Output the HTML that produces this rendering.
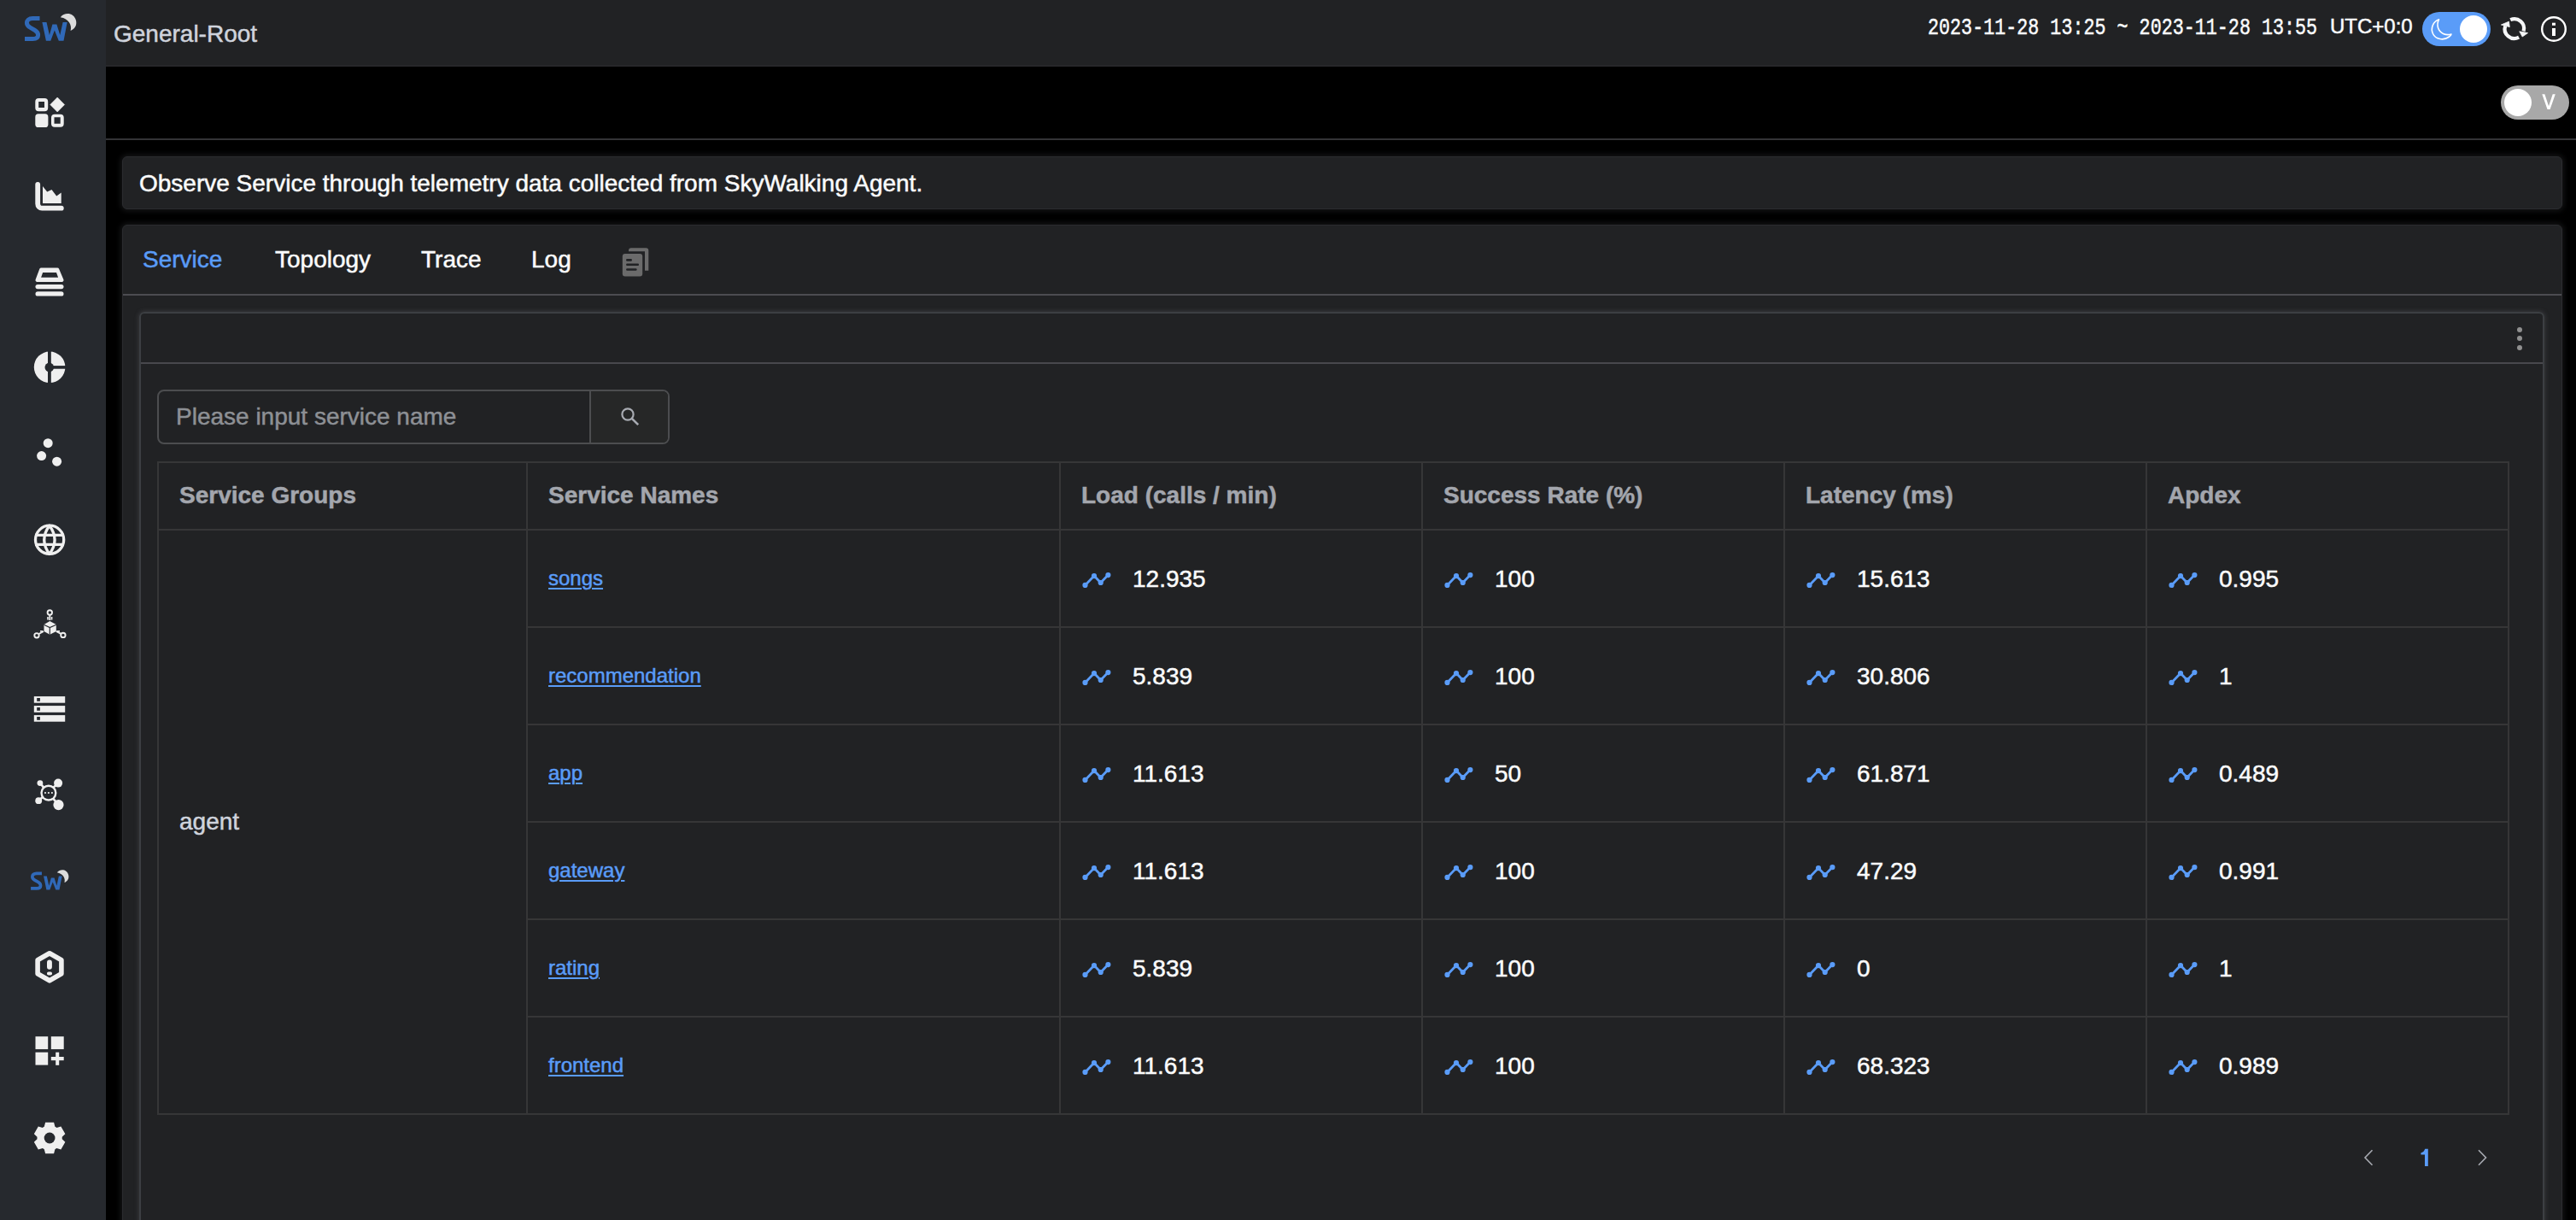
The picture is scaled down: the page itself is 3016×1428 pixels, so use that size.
<!DOCTYPE html>
<html><head><meta charset="utf-8">
<style>
*{box-sizing:border-box;margin:0;padding:0}
html,body{width:3016px;height:1428px;overflow:hidden;background:#000;font-family:"Liberation Sans",sans-serif;position:relative}
.abs{position:absolute}
.t{position:absolute;white-space:nowrap;font-size:28px;line-height:28px;-webkit-text-stroke-width:0.5px}
.b{font-weight:bold}
.lk{font-size:24px;line-height:24px;color:#5a9cf8;text-decoration:underline;text-decoration-thickness:2px;text-underline-offset:3px}
.mono{font-family:"Liberation Mono",monospace}
</style></head><body>
<div class="abs" style="left:0;top:0;width:124px;height:1428px;background:#26292e"></div>
<div class="abs" style="left:124px;top:0;width:2892px;height:78px;background:#212224;border-bottom:2px solid #27272a"></div>
<div class="abs" style="left:124px;top:78px;width:2892px;height:86px;background:#000;border-bottom:2px solid #333336"></div>
<svg class="abs" style="left:0;top:0" width="124" height="1428" viewBox="0 0 124 1428">
<g transform="">
<path d="M46.5,21.6 H38.2 C33.6,21.6 31.4,24 31.4,26.8 C31.4,29.4 32.9,30.9 35.6,32.4 L40.6,35.2 C43.4,36.8 44.6,38.4 44.6,41 C44.6,43.6 42.6,45.5 38.4,45.5 H29" fill="none" stroke="#3069b8" stroke-width="5"/>
<path d="M49.4,26 H54.5 L57.9,41 L61.4,28.6 H66.4 L70.3,41 L73.6,26 H78.7 L74.5,47.7 H68.8 L63.9,35.5 L59.3,47.7 H53.9 Z" fill="#3069b8"/>
<path d="M70.8,20.2 C75.5,14 86.5,14.5 89,24 C90.3,29.5 87.5,33.8 82.6,36 C84.5,29.5 80.5,21.8 70.8,20.2 Z" fill="#dcdcdc"/>
</g>
<!-- 1 grid -->
<g fill="#efefef">
<path fill-rule="evenodd" d="M45.3,115 H52.2 A4,4 0 0 1 56.2,119 V126.3 A4,4 0 0 1 52.2,130.3 H45.3 A4,4 0 0 1 41.3,126.3 V119 A4,4 0 0 1 45.3,115 Z M45.2,119 V126 H52 V119 Z"/>
<path d="M67.2,114 L75.6,122.5 L67.2,131 L58.8,122.5 Z" stroke="#efefef" stroke-width="0.6" stroke-linejoin="round"/>
<rect x="41.3" y="133.3" width="15.1" height="15.7" rx="3.6"/>
<path fill-rule="evenodd" d="M64,133.7 H70.7 A4,4 0 0 1 74.7,137.7 V144.7 A4,4 0 0 1 70.7,148.7 H64 A4,4 0 0 1 60,144.7 V137.7 A4,4 0 0 1 64,133.7 Z M63.5,137.2 V144.8 H70.7 V137.2 Z"/>
</g>
<!-- 2 chart -->
<path d="M44.2,215.8 V238.6 A5,5 0 0 0 49.2,243.7 H71.8" fill="none" stroke="#efefef" stroke-width="5.8" stroke-linecap="round"/>
<path d="M50,218 L55.2,224.4 L60.5,221.9 L66.2,229.5 L71.7,225.5 V238.1 H50 Z" fill="#efefef"/>
<!-- 3 stack -->
<path fill-rule="evenodd" fill="#efefef" d="M48.2,313.4 H67.2 A2,2 0 0 1 69.1,314.7 L74.4,327.2 A2,2 0 0 1 72.5,329.9 H43.5 A2,2 0 0 1 41.6,327.2 L46.3,314.7 A2,2 0 0 1 48.2,313.4 Z M50.1,319.1 H66 L68.1,324.7 H48.1 Z"/>
<rect x="41.5" y="333" width="33" height="5.2" rx="2.6" fill="#efefef"/>
<rect x="41.5" y="341.3" width="33" height="5.3" rx="2.65" fill="#efefef"/>
<!-- 4 donut -->
<circle cx="58.1" cy="429.8" r="18.3" fill="#efefef"/>
<rect x="56" y="410" width="3.8" height="40" fill="#26292e"/>
<rect x="58" y="428.1" width="20" height="3.6" fill="#26292e"/>
<circle cx="57.8" cy="429.9" r="5.3" fill="#26292e"/>
<!-- 5 dots -->
<g fill="#efefef"><circle cx="56.2" cy="518.7" r="5.5"/><circle cx="48.6" cy="533.6" r="5.5"/><circle cx="66.6" cy="540.2" r="5.5"/></g>
<!-- 6 globe -->
<g fill="none" stroke="#efefef" stroke-width="3.3">
<circle cx="58.1" cy="631.8" r="16.6"/>
<path d="M57.9,615.2 Q45.6,631.8 57.9,648.4 Q70.2,631.8 57.9,615.2 Z" stroke-linejoin="round"/>
<line x1="41" y1="626.4" x2="75" y2="626.4"/>
<line x1="41" y1="637.3" x2="75" y2="637.3"/>
</g>
<!-- 7 cube nodes -->
<g fill="none" stroke="#efefef" stroke-width="1.9">
<circle cx="58.3" cy="717" r="2.7"/><circle cx="43" cy="743.8" r="2.7"/><circle cx="73.9" cy="743.4" r="2.7"/>
<line x1="58.3" y1="720" x2="58.3" y2="726"/><line x1="45.5" y1="742" x2="51" y2="739"/><line x1="71.4" y1="741.8" x2="65.8" y2="738.8"/>
</g>
<path d="M58.3,727 L65.8,731 V739 L58.3,742.7 L51.5,739 V731 Z" fill="#efefef"/>
<path d="M51.5,731.2 L58.3,734.6 L65.8,731.2 M58.3,734.6 V742.7" fill="none" stroke="#26292e" stroke-width="1.2"/>
<g fill="#efefef"><rect x="55.2" y="722" width="1.6" height="3.5"/><rect x="59.8" y="722" width="1.6" height="3.5"/><rect x="47" y="738" width="3" height="1.6"/><rect x="67" y="738" width="3" height="1.6"/></g>
<!-- 8 server list -->
<g fill="#efefef"><rect x="39.8" y="815.1" width="36.4" height="7.6"/><rect x="39.8" y="826.1" width="36.4" height="7.7"/><rect x="39.8" y="837.1" width="36.4" height="7.6"/></g>
<g fill="#26292e"><rect x="43.2" y="817" width="3.7" height="3.8"/><rect x="43.2" y="828" width="3.7" height="3.8"/><rect x="43.2" y="839" width="3.7" height="3.8"/></g>
<!-- 9 network -->
<g stroke="#efefef" stroke-width="2.6"><line x1="46.9" y1="916.6" x2="68.5" y2="942.1"/><line x1="68.1" y1="916.6" x2="45.2" y2="937.2"/></g>
<circle cx="56.9" cy="928.1" r="9.6" fill="#efefef"/><circle cx="56.9" cy="928.1" r="7.2" fill="#26292e"/>
<g fill="#efefef"><circle cx="46.9" cy="916.6" r="3.4"/><circle cx="68.1" cy="916.6" r="5"/><circle cx="45.2" cy="937.2" r="3.9"/><circle cx="68.5" cy="942.1" r="6.1"/>
<circle cx="53" cy="928" r="1.1"/><circle cx="56.9" cy="928" r="1.1"/><circle cx="60.9" cy="928" r="1.1"/></g>
<!-- 10 logo small -->
<g transform="translate(14.76,1006.5) scale(0.735)">
<path d="M46.5,21.6 H38.2 C33.6,21.6 31.4,24 31.4,26.8 C31.4,29.4 32.9,30.9 35.6,32.4 L40.6,35.2 C43.4,36.8 44.6,38.4 44.6,41 C44.6,43.6 42.6,45.5 38.4,45.5 H29" fill="none" stroke="#3069b8" stroke-width="5"/>
<path d="M49.4,26 H54.5 L57.9,41 L61.4,28.6 H66.4 L70.3,41 L73.6,26 H78.7 L74.5,47.7 H68.8 L63.9,35.5 L59.3,47.7 H53.9 Z" fill="#3069b8"/>
<path d="M70.8,20.2 C75.5,14 86.5,14.5 89,24 C90.3,29.5 87.5,33.8 82.6,36 C84.5,29.5 80.5,21.8 70.8,20.2 Z" fill="#dcdcdc"/>
</g>
<!-- 11 hexagon -->
<path d="M58,1115.8 L71.9,1123.8 V1139.8 L58,1147.8 L44.1,1139.8 V1123.8 Z" fill="none" stroke="#efefef" stroke-width="5.6" stroke-linejoin="round"/>
<rect x="55" y="1123.5" width="5.9" height="11.2" rx="2.9" fill="#efefef"/>
<rect x="55" y="1137.5" width="6" height="4" rx="1.8" fill="#efefef"/>
<!-- 12 grid plus -->
<g fill="#efefef"><rect x="41.5" y="1213.2" width="14.7" height="14.9"/><rect x="59.8" y="1213.2" width="14.9" height="14.9"/><rect x="41.5" y="1231.7" width="14.7" height="14.9"/>
<rect x="65.2" y="1231.7" width="4" height="15.1"/><rect x="59.8" y="1237" width="14.9" height="4.2"/></g>
<!-- 13 gear -->
<path d="M51.80,1318.80 L53.10,1313.80 L63.10,1313.80 L64.40,1318.80 A13.20,13.20 0 0 1 66.38,1319.94 L71.36,1318.57 L76.36,1327.23 L72.68,1330.86 A13.20,13.20 0 0 1 72.68,1333.14 L76.36,1336.77 L71.36,1345.43 L66.38,1344.06 A13.20,13.20 0 0 1 64.40,1345.20 L63.10,1350.20 L53.10,1350.20 L51.80,1345.20 A13.20,13.20 0 0 1 49.82,1344.06 L44.84,1345.43 L39.84,1336.77 L43.52,1333.14 A13.20,13.20 0 0 1 43.52,1330.86 L39.84,1327.23 L44.84,1318.57 L49.82,1319.94 A13.20,13.20 0 0 1 51.80,1318.80 Z" fill="#efefef"/>
<circle cx="58.1" cy="1332" r="6.4" fill="#26292e"/>
</svg>
<div class="t" style="left:133px;top:26px;color:#cfd3dc">General-Root</div>
<div class="t mono" style="left:2257px;top:18.6px;color:#fafbfc;font-size:27.6px;line-height:28px;transform-origin:0 0;transform:scaleX(0.787);-webkit-text-stroke:0.5px #fafbfc">2023-11-28 13:25 ~ 2023-11-28 13:55</div>
<div class="t" style="left:2728px;top:19px;color:#fafbfc;font-size:24px;line-height:24px">UTC+0:0</div>
<div class="abs" style="left:2836px;top:14px;width:80px;height:40px;border-radius:20px;background:#5a9cf8"></div>
<div class="abs" style="left:2880px;top:18px;width:32px;height:32px;border-radius:16px;background:#fff"></div>
<svg class="abs" style="left:2840px;top:18px" width="36" height="34" viewBox="2840 18 36 34"><path d="M2855.5,22.8 C2848.5,25.5 2845.5,33 2848.5,39.5 C2851.5,46 2861,48 2867.5,43 C2869,42 2870,40.5 2870,40 C2863.5,42 2856.5,39 2854.5,32.5 C2853.5,29 2854,25.5 2855.5,22.8 Z" fill="none" stroke="#fff" stroke-width="1.6" stroke-linejoin="round"/></svg>
<svg class="abs" style="left:2924px;top:16px" width="40" height="36" viewBox="2924 16 40 36">
<path d="M2933.2,30.3 A11.2,11.2 0 0 0 2949.1,43.7" fill="none" stroke="#f5f6f7" stroke-width="4.2"/>
<path d="M2939.2,23.2 A11.2,11.2 0 0 1 2954.6,36.5" fill="none" stroke="#f5f6f7" stroke-width="4.2"/>
<path d="M2928.4,29 L2937.4,25.2 L2938.3,31.6 Z" fill="#f5f6f7" stroke="#f5f6f7" stroke-width="0.8" stroke-linejoin="round"/>
<path d="M2959.6,38.6 L2949.8,36.8 L2953.2,43 Z" fill="#f5f6f7" stroke="#f5f6f7" stroke-width="0.8" stroke-linejoin="round"/>
</svg>
<svg class="abs" style="left:2970px;top:14px" width="40" height="40" viewBox="2970 14 40 40">
<circle cx="2990" cy="34" r="13.8" fill="none" stroke="#fff" stroke-width="2.4"/>
<rect x="2988" y="26.7" width="4" height="3.1" fill="#fff"/><rect x="2988" y="33" width="4" height="9" fill="#fff"/>
</svg>
<div class="abs" style="left:2928px;top:100px;width:80px;height:40px;border-radius:20px;background:#a8a8a8"></div>
<div class="abs" style="left:2932px;top:104px;width:32px;height:32px;border-radius:16px;background:#fff"></div>
<svg class="abs" style="left:2970px;top:105px" width="28" height="28" viewBox="2970 105 28 28"><path d="M2976.3,110.2 H2979.4 L2984.05,124.3 L2988.7,110.2 H2991.8 L2985.6,128 H2982.5 Z" fill="#fff"/></svg>

<div class="abs" style="left:143px;top:183px;width:2857px;height:62px;background:#212224;border:1px solid #2b2c2f;border-radius:6px;box-shadow:0 0 6px 2px rgba(70,72,76,0.3)"></div>
<div class="abs" style="left:143px;top:263px;width:2857px;height:1300px;background:#212224;border:1px solid #2b2c2f;border-radius:6px;box-shadow:0 0 6px 2px rgba(70,72,76,0.3)"></div>
<div class="t" style="left:163px;top:201px;color:#fafbfc">Observe Service through telemetry data collected from SkyWalking Agent.</div>
<div class="t" style="left:167px;top:290px;color:#5a9cf8">Service</div>
<div class="t" style="left:322px;top:290px;color:#fafbfc">Topology</div>
<div class="t" style="left:493px;top:290px;color:#fafbfc">Trace</div>
<div class="t" style="left:622px;top:290px;color:#fafbfc">Log</div>
<svg class="abs" style="left:726px;top:288px" width="36" height="38" viewBox="726 288 36 38">
<path d="M736,294.3 V293.2 A3,3 0 0 1 739,290.2 H756.3 A3,3 0 0 1 759.3,293.2 V316.8 H755 V294.3 Z" fill="#6b6b6b"/>
<rect x="728.8" y="297" width="23.4" height="26.6" rx="3" fill="#6b6b6b"/>
<g fill="#212224"><rect x="733.1" y="302.9" width="6.8" height="2.9" rx="1.2"/><rect x="733.1" y="308.6" width="14.9" height="2.5" rx="1"/><rect x="733.1" y="314.2" width="12.5" height="2.6" rx="1.2"/></g>
</svg>
<div class="abs" style="left:144px;top:344px;width:2855px;height:2px;background:#4c4c51"></div>

<div class="abs" style="left:163px;top:365px;width:2816px;height:1200px;border:2px solid #3c3f43;border-radius:6px;box-shadow:0 0 5px 1px rgba(96,98,102,0.35)"></div>
<div class="abs" style="left:165px;top:424px;width:2812px;height:2px;background:#48484d"></div>
<div class="abs" style="left:2947px;top:383px;width:6px;height:6px;border-radius:3px;background:#909090"></div>
<div class="abs" style="left:2947px;top:393px;width:6px;height:6px;border-radius:3px;background:#909090"></div>
<div class="abs" style="left:2947px;top:404px;width:6px;height:6px;border-radius:3px;background:#909090"></div>

<div class="abs" style="left:184px;top:456px;width:600px;height:64px;border:2px solid #4c4d4f;border-radius:8px;overflow:hidden">
 <div class="abs" style="left:504px;top:0;width:92px;height:60px;background:#262727;border-left:2px solid #4c4d4f"></div>
</div>
<div class="t" style="left:206px;top:474px;color:#8d9095">Please input service name</div>
<svg class="abs" style="left:722px;top:472px" width="30" height="30" viewBox="722 472 30 30"><circle cx="735" cy="485" r="6.6" fill="none" stroke="#a8abb2" stroke-width="2.2"/><line x1="739.8" y1="489.8" x2="747.2" y2="497.2" stroke="#a8abb2" stroke-width="2.6"/></svg>

<div class="abs" style="left:184px;top:540px;width:2754px;height:765px;border:2px solid #363637"></div><div class="abs" style="left:616px;top:540px;width:2px;height:763px;background:#363637"></div><div class="abs" style="left:1240px;top:540px;width:2px;height:763px;background:#363637"></div><div class="abs" style="left:1664px;top:540px;width:2px;height:763px;background:#363637"></div><div class="abs" style="left:2088px;top:540px;width:2px;height:763px;background:#363637"></div><div class="abs" style="left:2512px;top:540px;width:2px;height:763px;background:#363637"></div><div class="abs" style="left:184px;top:619px;width:2752px;height:2px;background:#363637"></div><div class="abs" style="left:616px;top:733px;width:2320px;height:2px;background:#363637"></div><div class="abs" style="left:616px;top:847px;width:2320px;height:2px;background:#363637"></div><div class="abs" style="left:616px;top:961px;width:2320px;height:2px;background:#363637"></div><div class="abs" style="left:616px;top:1075px;width:2320px;height:2px;background:#363637"></div><div class="abs" style="left:616px;top:1189px;width:2320px;height:2px;background:#363637"></div><div class="t b" style="left:210px;top:566px;color:#a3a6ad">Service Groups</div><div class="t b" style="left:642px;top:566px;color:#a3a6ad">Service Names</div><div class="t b" style="left:1266px;top:566px;color:#a3a6ad">Load (calls / min)</div><div class="t b" style="left:1690px;top:566px;color:#a3a6ad">Success Rate (%)</div><div class="t b" style="left:2114px;top:566px;color:#a3a6ad">Latency (ms)</div><div class="t b" style="left:2538px;top:566px;color:#a3a6ad">Apdex</div><div class="t" style="left:210px;top:948px;color:#cfd3dc">agent</div><div class="t lk" style="left:642px;top:665px">songs</div><svg class="abs" style="left:1266px;top:668px" width="36" height="22" viewBox="1266 668 36 22"><polyline points="1270.5,684.9 1281,674.1 1288.7,682 1297.4,673.1" fill="none" stroke="#5a9cf8" stroke-width="2.8" stroke-linejoin="round"/><g fill="#5a9cf8"><circle cx="1270.5" cy="684.9" r="3.1"/><circle cx="1281" cy="674.1" r="3.1"/><circle cx="1288.7" cy="682" r="3.1"/><circle cx="1297.4" cy="673.1" r="3.1"/></g></svg><div class="t" style="left:1326px;top:664px;color:#fafbfc">12.935</div><svg class="abs" style="left:1690px;top:668px" width="36" height="22" viewBox="1266 668 36 22"><polyline points="1270.5,684.9 1281,674.1 1288.7,682 1297.4,673.1" fill="none" stroke="#5a9cf8" stroke-width="2.8" stroke-linejoin="round"/><g fill="#5a9cf8"><circle cx="1270.5" cy="684.9" r="3.1"/><circle cx="1281" cy="674.1" r="3.1"/><circle cx="1288.7" cy="682" r="3.1"/><circle cx="1297.4" cy="673.1" r="3.1"/></g></svg><div class="t" style="left:1750px;top:664px;color:#fafbfc">100</div><svg class="abs" style="left:2114px;top:668px" width="36" height="22" viewBox="1266 668 36 22"><polyline points="1270.5,684.9 1281,674.1 1288.7,682 1297.4,673.1" fill="none" stroke="#5a9cf8" stroke-width="2.8" stroke-linejoin="round"/><g fill="#5a9cf8"><circle cx="1270.5" cy="684.9" r="3.1"/><circle cx="1281" cy="674.1" r="3.1"/><circle cx="1288.7" cy="682" r="3.1"/><circle cx="1297.4" cy="673.1" r="3.1"/></g></svg><div class="t" style="left:2174px;top:664px;color:#fafbfc">15.613</div><svg class="abs" style="left:2538px;top:668px" width="36" height="22" viewBox="1266 668 36 22"><polyline points="1270.5,684.9 1281,674.1 1288.7,682 1297.4,673.1" fill="none" stroke="#5a9cf8" stroke-width="2.8" stroke-linejoin="round"/><g fill="#5a9cf8"><circle cx="1270.5" cy="684.9" r="3.1"/><circle cx="1281" cy="674.1" r="3.1"/><circle cx="1288.7" cy="682" r="3.1"/><circle cx="1297.4" cy="673.1" r="3.1"/></g></svg><div class="t" style="left:2598px;top:664px;color:#fafbfc">0.995</div><div class="t lk" style="left:642px;top:779px">recommendation</div><svg class="abs" style="left:1266px;top:782px" width="36" height="22" viewBox="1266 668 36 22"><polyline points="1270.5,684.9 1281,674.1 1288.7,682 1297.4,673.1" fill="none" stroke="#5a9cf8" stroke-width="2.8" stroke-linejoin="round"/><g fill="#5a9cf8"><circle cx="1270.5" cy="684.9" r="3.1"/><circle cx="1281" cy="674.1" r="3.1"/><circle cx="1288.7" cy="682" r="3.1"/><circle cx="1297.4" cy="673.1" r="3.1"/></g></svg><div class="t" style="left:1326px;top:778px;color:#fafbfc">5.839</div><svg class="abs" style="left:1690px;top:782px" width="36" height="22" viewBox="1266 668 36 22"><polyline points="1270.5,684.9 1281,674.1 1288.7,682 1297.4,673.1" fill="none" stroke="#5a9cf8" stroke-width="2.8" stroke-linejoin="round"/><g fill="#5a9cf8"><circle cx="1270.5" cy="684.9" r="3.1"/><circle cx="1281" cy="674.1" r="3.1"/><circle cx="1288.7" cy="682" r="3.1"/><circle cx="1297.4" cy="673.1" r="3.1"/></g></svg><div class="t" style="left:1750px;top:778px;color:#fafbfc">100</div><svg class="abs" style="left:2114px;top:782px" width="36" height="22" viewBox="1266 668 36 22"><polyline points="1270.5,684.9 1281,674.1 1288.7,682 1297.4,673.1" fill="none" stroke="#5a9cf8" stroke-width="2.8" stroke-linejoin="round"/><g fill="#5a9cf8"><circle cx="1270.5" cy="684.9" r="3.1"/><circle cx="1281" cy="674.1" r="3.1"/><circle cx="1288.7" cy="682" r="3.1"/><circle cx="1297.4" cy="673.1" r="3.1"/></g></svg><div class="t" style="left:2174px;top:778px;color:#fafbfc">30.806</div><svg class="abs" style="left:2538px;top:782px" width="36" height="22" viewBox="1266 668 36 22"><polyline points="1270.5,684.9 1281,674.1 1288.7,682 1297.4,673.1" fill="none" stroke="#5a9cf8" stroke-width="2.8" stroke-linejoin="round"/><g fill="#5a9cf8"><circle cx="1270.5" cy="684.9" r="3.1"/><circle cx="1281" cy="674.1" r="3.1"/><circle cx="1288.7" cy="682" r="3.1"/><circle cx="1297.4" cy="673.1" r="3.1"/></g></svg><div class="t" style="left:2598px;top:778px;color:#fafbfc">1</div><div class="t lk" style="left:642px;top:893px">app</div><svg class="abs" style="left:1266px;top:896px" width="36" height="22" viewBox="1266 668 36 22"><polyline points="1270.5,684.9 1281,674.1 1288.7,682 1297.4,673.1" fill="none" stroke="#5a9cf8" stroke-width="2.8" stroke-linejoin="round"/><g fill="#5a9cf8"><circle cx="1270.5" cy="684.9" r="3.1"/><circle cx="1281" cy="674.1" r="3.1"/><circle cx="1288.7" cy="682" r="3.1"/><circle cx="1297.4" cy="673.1" r="3.1"/></g></svg><div class="t" style="left:1326px;top:892px;color:#fafbfc">11.613</div><svg class="abs" style="left:1690px;top:896px" width="36" height="22" viewBox="1266 668 36 22"><polyline points="1270.5,684.9 1281,674.1 1288.7,682 1297.4,673.1" fill="none" stroke="#5a9cf8" stroke-width="2.8" stroke-linejoin="round"/><g fill="#5a9cf8"><circle cx="1270.5" cy="684.9" r="3.1"/><circle cx="1281" cy="674.1" r="3.1"/><circle cx="1288.7" cy="682" r="3.1"/><circle cx="1297.4" cy="673.1" r="3.1"/></g></svg><div class="t" style="left:1750px;top:892px;color:#fafbfc">50</div><svg class="abs" style="left:2114px;top:896px" width="36" height="22" viewBox="1266 668 36 22"><polyline points="1270.5,684.9 1281,674.1 1288.7,682 1297.4,673.1" fill="none" stroke="#5a9cf8" stroke-width="2.8" stroke-linejoin="round"/><g fill="#5a9cf8"><circle cx="1270.5" cy="684.9" r="3.1"/><circle cx="1281" cy="674.1" r="3.1"/><circle cx="1288.7" cy="682" r="3.1"/><circle cx="1297.4" cy="673.1" r="3.1"/></g></svg><div class="t" style="left:2174px;top:892px;color:#fafbfc">61.871</div><svg class="abs" style="left:2538px;top:896px" width="36" height="22" viewBox="1266 668 36 22"><polyline points="1270.5,684.9 1281,674.1 1288.7,682 1297.4,673.1" fill="none" stroke="#5a9cf8" stroke-width="2.8" stroke-linejoin="round"/><g fill="#5a9cf8"><circle cx="1270.5" cy="684.9" r="3.1"/><circle cx="1281" cy="674.1" r="3.1"/><circle cx="1288.7" cy="682" r="3.1"/><circle cx="1297.4" cy="673.1" r="3.1"/></g></svg><div class="t" style="left:2598px;top:892px;color:#fafbfc">0.489</div><div class="t lk" style="left:642px;top:1007px">gateway</div><svg class="abs" style="left:1266px;top:1010px" width="36" height="22" viewBox="1266 668 36 22"><polyline points="1270.5,684.9 1281,674.1 1288.7,682 1297.4,673.1" fill="none" stroke="#5a9cf8" stroke-width="2.8" stroke-linejoin="round"/><g fill="#5a9cf8"><circle cx="1270.5" cy="684.9" r="3.1"/><circle cx="1281" cy="674.1" r="3.1"/><circle cx="1288.7" cy="682" r="3.1"/><circle cx="1297.4" cy="673.1" r="3.1"/></g></svg><div class="t" style="left:1326px;top:1006px;color:#fafbfc">11.613</div><svg class="abs" style="left:1690px;top:1010px" width="36" height="22" viewBox="1266 668 36 22"><polyline points="1270.5,684.9 1281,674.1 1288.7,682 1297.4,673.1" fill="none" stroke="#5a9cf8" stroke-width="2.8" stroke-linejoin="round"/><g fill="#5a9cf8"><circle cx="1270.5" cy="684.9" r="3.1"/><circle cx="1281" cy="674.1" r="3.1"/><circle cx="1288.7" cy="682" r="3.1"/><circle cx="1297.4" cy="673.1" r="3.1"/></g></svg><div class="t" style="left:1750px;top:1006px;color:#fafbfc">100</div><svg class="abs" style="left:2114px;top:1010px" width="36" height="22" viewBox="1266 668 36 22"><polyline points="1270.5,684.9 1281,674.1 1288.7,682 1297.4,673.1" fill="none" stroke="#5a9cf8" stroke-width="2.8" stroke-linejoin="round"/><g fill="#5a9cf8"><circle cx="1270.5" cy="684.9" r="3.1"/><circle cx="1281" cy="674.1" r="3.1"/><circle cx="1288.7" cy="682" r="3.1"/><circle cx="1297.4" cy="673.1" r="3.1"/></g></svg><div class="t" style="left:2174px;top:1006px;color:#fafbfc">47.29</div><svg class="abs" style="left:2538px;top:1010px" width="36" height="22" viewBox="1266 668 36 22"><polyline points="1270.5,684.9 1281,674.1 1288.7,682 1297.4,673.1" fill="none" stroke="#5a9cf8" stroke-width="2.8" stroke-linejoin="round"/><g fill="#5a9cf8"><circle cx="1270.5" cy="684.9" r="3.1"/><circle cx="1281" cy="674.1" r="3.1"/><circle cx="1288.7" cy="682" r="3.1"/><circle cx="1297.4" cy="673.1" r="3.1"/></g></svg><div class="t" style="left:2598px;top:1006px;color:#fafbfc">0.991</div><div class="t lk" style="left:642px;top:1121px">rating</div><svg class="abs" style="left:1266px;top:1124px" width="36" height="22" viewBox="1266 668 36 22"><polyline points="1270.5,684.9 1281,674.1 1288.7,682 1297.4,673.1" fill="none" stroke="#5a9cf8" stroke-width="2.8" stroke-linejoin="round"/><g fill="#5a9cf8"><circle cx="1270.5" cy="684.9" r="3.1"/><circle cx="1281" cy="674.1" r="3.1"/><circle cx="1288.7" cy="682" r="3.1"/><circle cx="1297.4" cy="673.1" r="3.1"/></g></svg><div class="t" style="left:1326px;top:1120px;color:#fafbfc">5.839</div><svg class="abs" style="left:1690px;top:1124px" width="36" height="22" viewBox="1266 668 36 22"><polyline points="1270.5,684.9 1281,674.1 1288.7,682 1297.4,673.1" fill="none" stroke="#5a9cf8" stroke-width="2.8" stroke-linejoin="round"/><g fill="#5a9cf8"><circle cx="1270.5" cy="684.9" r="3.1"/><circle cx="1281" cy="674.1" r="3.1"/><circle cx="1288.7" cy="682" r="3.1"/><circle cx="1297.4" cy="673.1" r="3.1"/></g></svg><div class="t" style="left:1750px;top:1120px;color:#fafbfc">100</div><svg class="abs" style="left:2114px;top:1124px" width="36" height="22" viewBox="1266 668 36 22"><polyline points="1270.5,684.9 1281,674.1 1288.7,682 1297.4,673.1" fill="none" stroke="#5a9cf8" stroke-width="2.8" stroke-linejoin="round"/><g fill="#5a9cf8"><circle cx="1270.5" cy="684.9" r="3.1"/><circle cx="1281" cy="674.1" r="3.1"/><circle cx="1288.7" cy="682" r="3.1"/><circle cx="1297.4" cy="673.1" r="3.1"/></g></svg><div class="t" style="left:2174px;top:1120px;color:#fafbfc">0</div><svg class="abs" style="left:2538px;top:1124px" width="36" height="22" viewBox="1266 668 36 22"><polyline points="1270.5,684.9 1281,674.1 1288.7,682 1297.4,673.1" fill="none" stroke="#5a9cf8" stroke-width="2.8" stroke-linejoin="round"/><g fill="#5a9cf8"><circle cx="1270.5" cy="684.9" r="3.1"/><circle cx="1281" cy="674.1" r="3.1"/><circle cx="1288.7" cy="682" r="3.1"/><circle cx="1297.4" cy="673.1" r="3.1"/></g></svg><div class="t" style="left:2598px;top:1120px;color:#fafbfc">1</div><div class="t lk" style="left:642px;top:1235px">frontend</div><svg class="abs" style="left:1266px;top:1238px" width="36" height="22" viewBox="1266 668 36 22"><polyline points="1270.5,684.9 1281,674.1 1288.7,682 1297.4,673.1" fill="none" stroke="#5a9cf8" stroke-width="2.8" stroke-linejoin="round"/><g fill="#5a9cf8"><circle cx="1270.5" cy="684.9" r="3.1"/><circle cx="1281" cy="674.1" r="3.1"/><circle cx="1288.7" cy="682" r="3.1"/><circle cx="1297.4" cy="673.1" r="3.1"/></g></svg><div class="t" style="left:1326px;top:1234px;color:#fafbfc">11.613</div><svg class="abs" style="left:1690px;top:1238px" width="36" height="22" viewBox="1266 668 36 22"><polyline points="1270.5,684.9 1281,674.1 1288.7,682 1297.4,673.1" fill="none" stroke="#5a9cf8" stroke-width="2.8" stroke-linejoin="round"/><g fill="#5a9cf8"><circle cx="1270.5" cy="684.9" r="3.1"/><circle cx="1281" cy="674.1" r="3.1"/><circle cx="1288.7" cy="682" r="3.1"/><circle cx="1297.4" cy="673.1" r="3.1"/></g></svg><div class="t" style="left:1750px;top:1234px;color:#fafbfc">100</div><svg class="abs" style="left:2114px;top:1238px" width="36" height="22" viewBox="1266 668 36 22"><polyline points="1270.5,684.9 1281,674.1 1288.7,682 1297.4,673.1" fill="none" stroke="#5a9cf8" stroke-width="2.8" stroke-linejoin="round"/><g fill="#5a9cf8"><circle cx="1270.5" cy="684.9" r="3.1"/><circle cx="1281" cy="674.1" r="3.1"/><circle cx="1288.7" cy="682" r="3.1"/><circle cx="1297.4" cy="673.1" r="3.1"/></g></svg><div class="t" style="left:2174px;top:1234px;color:#fafbfc">68.323</div><svg class="abs" style="left:2538px;top:1238px" width="36" height="22" viewBox="1266 668 36 22"><polyline points="1270.5,684.9 1281,674.1 1288.7,682 1297.4,673.1" fill="none" stroke="#5a9cf8" stroke-width="2.8" stroke-linejoin="round"/><g fill="#5a9cf8"><circle cx="1270.5" cy="684.9" r="3.1"/><circle cx="1281" cy="674.1" r="3.1"/><circle cx="1288.7" cy="682" r="3.1"/><circle cx="1297.4" cy="673.1" r="3.1"/></g></svg><div class="t" style="left:2598px;top:1234px;color:#fafbfc">0.989</div>

<svg class="abs" style="left:2760px;top:1340px" width="160" height="30" viewBox="2760 1340 160 30">
<path d="M2777.5,1346.3 L2769,1355 L2777.5,1363.7" fill="none" stroke="#a8abb2" stroke-width="1.6"/>
<path d="M2902,1346.3 L2910.5,1355 L2902,1363.7" fill="none" stroke="#a8abb2" stroke-width="1.6"/>
</svg>
<svg class="abs" style="left:2830px;top:1340px" width="20" height="30" viewBox="2830 1340 20 30"><path d="M2839.2,1344.8 H2842.8 V1365 H2839 V1351.6 H2835.3 A0.9,0.9 0 0 1 2834.4,1350.7 V1349.4 C2836.8,1349 2838.3,1347.4 2839.2,1344.8 Z" fill="#5a9cf8"/></svg>
</body></html>
